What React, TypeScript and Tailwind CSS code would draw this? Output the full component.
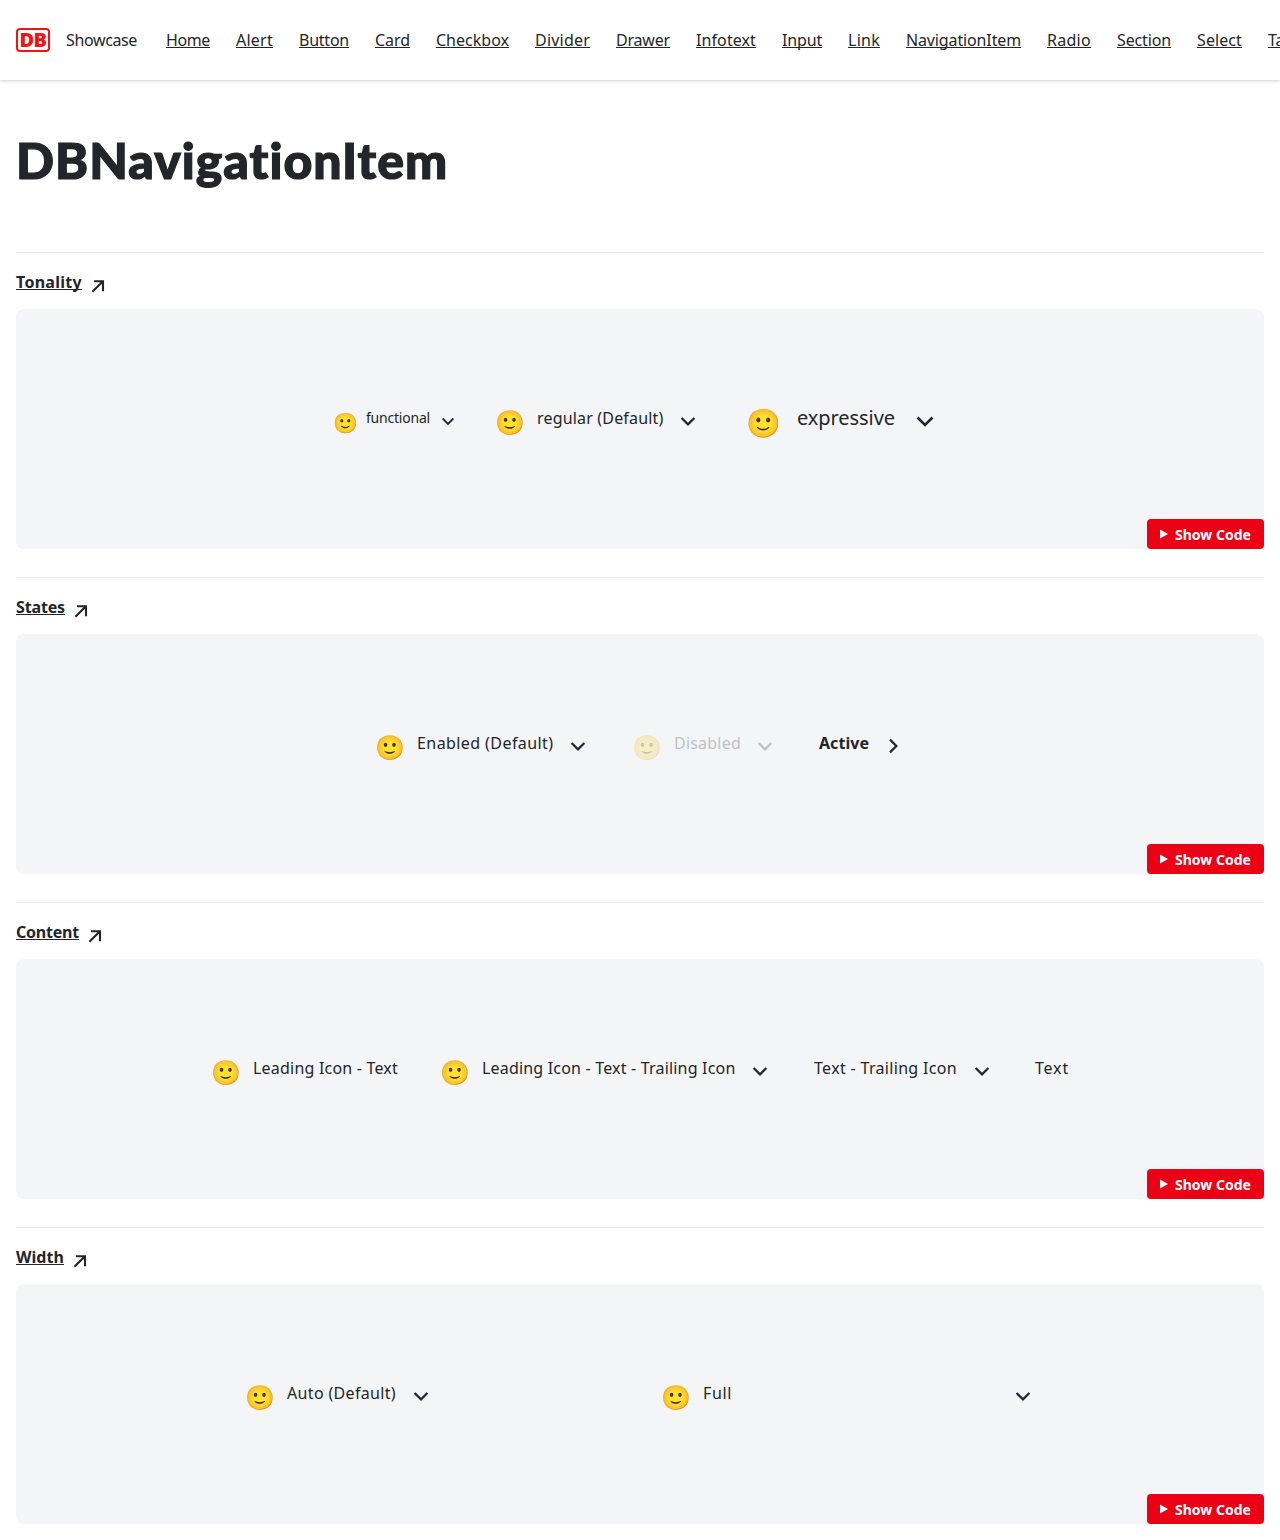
import { useLayoutEffect, useRef, useState, type ReactNode } from "react";

/** Text tracked so that its run fills the given width. */
function Fit({ w, children, className = "" }: { w: number; children: string; className?: string }) {
  const ref = useRef<HTMLSpanElement>(null);
  const [track, setTrack] = useState(0);
  useLayoutEffect(() => {
    if (ref.current) setTrack((w - ref.current.getBoundingClientRect().width) / children.length);
  }, [w, children]);
  return (
    <span ref={ref} className={`inline-block whitespace-nowrap ${className}`} style={{ letterSpacing: track }}>
      {children}
    </span>
  );
}

const links: [string, number][] = [
  ["Home", 44], ["Alert", 37], ["Button", 50], ["Card", 35], ["Checkbox", 73], ["Divider", 55], ["Drawer", 54],
  ["Infotext", 60], ["Input", 40], ["Link", 32], ["NavigationItem", 115], ["Radio", 44], ["Section", 54],
  ["Select", 45], ["Tabs", 34],
];

const underline = "underline decoration-1 underline-offset-[1px] [text-decoration-skip-ink:none]";

function Chevron({ size, right = false }: { size: number; right?: boolean }) {
  return (
    <svg width={size} height={size} viewBox="0 0 24 24" fill="none" stroke="currentColor" strokeWidth="2.2" className={right ? "-rotate-90" : ""}>
      <path d="M5.6 9 12 15.4 18.4 9" />
    </svg>
  );
}

type Size = "sm" | "md" | "lg";
type ItemProps = { label: string; w: number; size?: Size; icon?: boolean; trail?: "down" | "right" | null; tone?: string; full?: boolean };

const sizes = {
  sm: { emoji: "mt-[10px] w-6 text-[20px]", text: "text-[14px]", gap: "ml-[9px]", chev: 20, chevGap: "ml-[8px]" },
  md: { emoji: "mt-[8.4px] w-[30px] text-[24px]", text: "text-[16px]", gap: "ml-[12px]", chev: 24, chevGap: "ml-[12.5px]" },
  lg: { emoji: "mt-[8.4px] w-[34px] text-[28px]", text: "text-[20px]", gap: "ml-[16.5px]", chev: 28, chevGap: "ml-[16px]" },
};

function NavItem({ label, w, size = "md", icon = true, trail = "down", tone = "", full = false }: ItemProps) {
  const s = sizes[size];
  return (
    <div className={`flex h-10 items-center ${tone} ${full ? "w-[374px]" : ""}`}>
      {icon && <span className={`flex justify-center leading-none ${s.emoji}`}>🙂</span>}
      <span className={`${icon ? s.gap : ""} ${s.text} leading-6`}>
        <Fit w={w}>{label}</Fit>
      </span>
      {trail && (
        <span className={`mt-1.5 ${full ? "ml-auto" : s.chevGap}`}>
          <Chevron size={s.chev} right={trail === "right"} />
        </span>
      )}
    </div>
  );
}

function Section({ title, w, children }: { title: string; w: number; children: ReactNode }) {
  return (
    <section className="mb-[27.6px] border-t border-[#ebebeb]">
      <div className="flex h-[56.4px] items-center">
        <a className="flex items-center pt-0.5 text-[16px] font-bold leading-6">
          <Fit w={w} className={underline}>{title}</Fit>
          <svg width="14" height="14" viewBox="0 0 14 14" fill="none" stroke="currentColor" strokeWidth="2.1" className="ml-[9px] mt-[7px]">
            <path d="M1.4 12.8 12 2.2M3 2.2h9v10" />
          </svg>
        </a>
      </div>
      <div className="flex h-[240px] flex-col justify-between rounded-[8px] bg-[#f3f5f7]">
        <div className="mt-[88.6px] flex">{children}</div>
        <button className="flex h-[30px] w-[117px] items-center self-end rounded-[4px] bg-[#ec0016] pl-[13px] text-[14px] font-bold text-white">
          <svg width="8" height="10" viewBox="0 0 8 10" fill="currentColor" className="mr-[7px]"><path d="M0 .5 8 5 0 9.5z" /></svg>
          <Fit w={76}>Show Code</Fit>
        </button>
      </div>
    </section>
  );
}

export default function App() {
  return (
    <div className="h-[1540px] w-full overflow-hidden bg-white font-['Noto_Sans',sans-serif] text-[#232529]">
      <header className="flex h-20 items-center overflow-hidden px-4 shadow-[0_0_4px_rgba(0,0,0,0.3)]">
        <div className="flex h-6 w-[34px] shrink-0 items-center justify-center rounded-[4px] border-[2.5px] border-[#f01414] text-[20px] font-black leading-none text-[#f01414]">
          <Fit w={27}>DB</Fit>
        </div>
        <span className="ml-4 w-[100px] shrink-0 text-[16px]"><Fit w={71}>Showcase</Fit></span>
        <nav className="flex gap-[26px] text-[16px] leading-6">
          {links.map(([t, w]) => (
            <a key={t} className="shrink-0"><Fit w={w} className={underline}>{t}</Fit></a>
          ))}
        </nav>
      </header>
      <main className="px-4">
        <h1 className="flex h-[172px] items-center pb-3 font-['Lato',sans-serif] text-[50px] font-black leading-none [-webkit-text-stroke:1.2px_#232529]"><Fit w={433}>DBNavigationItem</Fit></h1>
        <Section title="Tonality" w={66}>
          <div className="ml-[317px]"><NavItem label="functional" w={64} size="sm" /></div>
          <div className="ml-[37px]"><NavItem label="regular (Default)" w={126.5} /></div>
          <div className="ml-[46.5px]"><NavItem label="expressive" w={98} size="lg" /></div>
        </Section>
        <Section title="States" w={49}>
          <div className="ml-[359px]"><NavItem label="Enabled (Default)" w={136.5} /></div>
          <div className="ml-[42px]"><NavItem label="Disabled" w={67} tone="opacity-25" /></div>
          <div className="ml-[41.5px]"><NavItem label="Active" w={50} icon={false} trail="right" tone="font-bold" /></div>
        </Section>
        <Section title="Content" w={63}>
          <div className="ml-[195px]"><NavItem label="Leading Icon - Text" w={145} trail={null} /></div>
          <div className="ml-[42px]"><NavItem label="Leading Icon - Text - Trailing Icon" w={253.5} /></div>
          <div className="ml-[42px]"><NavItem label="Text - Trailing Icon" w={143} icon={false} /></div>
          <div className="ml-[41.5px]"><NavItem label="Text" w={34} icon={false} trail={null} /></div>
        </Section>
        <Section title="Width" w={48}>
          <div className="ml-[229px]"><NavItem label="Auto (Default)" w={109} /></div>
          <div className="ml-[228.5px]"><NavItem label="Full" w={29} full /></div>
        </Section>
      </main>
    </div>
  );
}
